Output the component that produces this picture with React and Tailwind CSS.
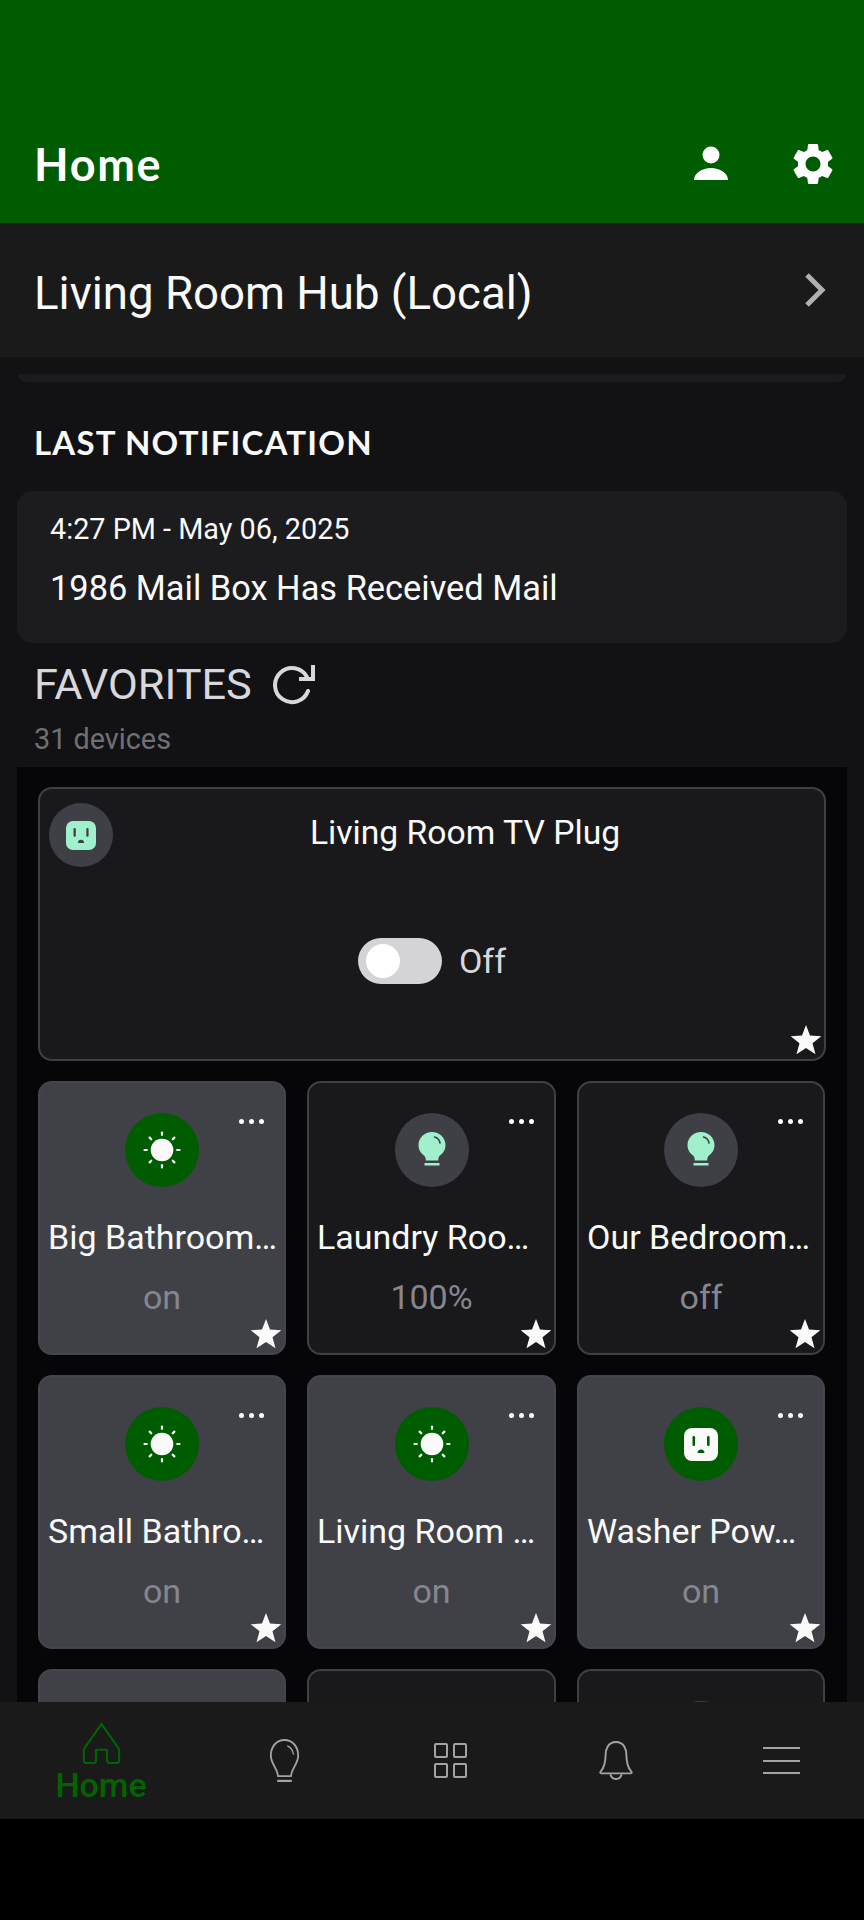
import { useState } from 'react'

const FONT = "font-['Roboto',sans-serif]"
const HEAD = "font-['Lato',sans-serif]"

function Star() {
  return (
    <svg viewBox="0 0 32 30" className="absolute bottom-[4px] right-[2px] h-[30px] w-[32px] fill-[#fafafa]">
      <path d="M16 0l4 10.6 11.3.6-8.800 7.100 3 11L16 23.100 6.500 29.300l3-11L.7 11.200 12 10.600z" />
    </svg>
  )
}

function Dots() {
  return (
    <div className="absolute right-[20px] top-[36px] flex gap-[5px]">
      <span className="h-[5px] w-[5px] rounded-full bg-white" />
      <span className="h-[5px] w-[5px] rounded-full bg-white" />
      <span className="h-[5px] w-[5px] rounded-full bg-white" />
    </div>
  )
}

function Sun() {
  const rays = [0, 45, 90, 135, 180, 225, 270, 315]
  return (
    <svg viewBox="0 0 40 40" className="h-[40px] w-[40px]">
      <circle cx="20" cy="20" r="11.300" fill="#fafafa" />
      {rays.map((r) => (
        <line key={r} x1="20" y1="2.500" x2="20" y2="4.800" stroke="#fafafa" strokeWidth="2.200" strokeLinecap="round" transform={`rotate(${r} 20 20)`} />
      ))}
    </svg>
  )
}

function Bulb() {
  return (
    <svg viewBox="0 0 30 38" className="h-[38px] w-[30px]">
      <path d="M15 1C7.500 1 1.500 6.800 1.500 14c0 4.800 2.300 7.800 5 10 1.600 1.300 2.300 2.800 2.300 5.500h12.400c0-2.700.7-4.200 2.300-5.500 2.700-2.200 5-5.200 5-10C28.500 6.800 22.500 1 15 1z" fill="#a0f0cd" />
      <rect x="7.500" y="32" width="15" height="2.500" fill="#a0f0cd" />
      <path d="M17.500 6c3 .6 5 3 5.500 6" fill="none" stroke="#3f4046" strokeWidth="1.600" strokeLinecap="round" />
    </svg>
  )
}

function Plug({ on, size = 34 }) {
  const color = on ? '#fafafa' : '#a0f0cd'
  const hole = on ? '#005c00' : '#3f4046'
  return (
    <svg viewBox="0 0 34 34" style={{ width: size, height: size }}>
      <rect x="0" y="1" width="34" height="33" rx="8" fill={color} />
      <rect x="8.500" y="9" width="2.600" height="10" rx="1.200" fill={hole} />
      <rect x="23" y="9" width="2.600" height="10" rx="1.200" fill={hole} />
      <path d="M13.500 26c0-2.200 1.500-3.600 3.500-3.600s3.500 1.400 3.500 3.600z" fill={hole} />
    </svg>
  )
}

function DeviceCard({ name, status, kind, on }) {
  return (
    <div className={`relative h-[274px] rounded-[14px] border-2 ${on ? 'border-[#45464c] bg-[#404146]' : 'border-[#3f4046] bg-[#19191b]'}`}>
      {kind !== 'none' && <Dots />}
      {kind !== 'none' && (
        <div className={`absolute left-1/2 top-[30px] flex h-[74px] w-[74px] -translate-x-1/2 items-center justify-center rounded-full ${on ? 'bg-[#005c00]' : 'bg-[#3f4046]'}`}>
          {kind === 'plug' ? <Plug on={on} /> : on ? <Sun /> : <Bulb />}
        </div>
      )}
      <p className="absolute left-[8px] top-[130px] whitespace-nowrap text-[34px] leading-[48px] text-[#fafafa]">{name}</p>
      <p className="absolute inset-x-0 top-[190px] text-center text-[34px] leading-[48px] text-[#85868f]">{status}</p>
      {kind !== 'none' && <Star />}
    </div>
  )
}

const devices = [
  { name: 'Big Bathroom…', status: 'on', kind: 'light', on: true },
  { name: 'Laundry Roo…', status: '100%', kind: 'light', on: false },
  { name: 'Our Bedroom…', status: 'off', kind: 'light', on: false },
  { name: 'Small Bathro…', status: 'on', kind: 'light', on: true },
  { name: 'Living Room …', status: 'on', kind: 'light', on: true },
  { name: 'Washer Pow…', status: 'on', kind: 'plug', on: true },
  { name: '', status: '', kind: 'none', on: true },
  { name: '', status: '', kind: 'none', on: false },
  { name: '', status: '', kind: 'light', on: false },
]

function BottomNav() {
  const stroke = '#a3a3a3'
  return (
    <nav className="flex h-[117px] shrink-0 items-start bg-[#1a1a1a]">
      <div className="ml-[52px] flex w-[98px] flex-col items-center pt-[20px]">
        <svg viewBox="0 0 42 44" preserveAspectRatio="none" className="h-[42px] w-[39px]" fill="none" stroke="#006400" strokeWidth="2.200">
          <path d="M21 2L3 27c-1 1-1 2-1 4v9c0 2 1 3 3 3h7c2 0 3-1 3-3V29h12v11c0 2 1 3 3 3h7c2 0 3-1 3-3v-9c0-2 0-3-1-4z" strokeLinejoin="round" />
        </svg>
        <span className="mt-[3px] text-[34px] font-medium leading-[36px] text-[#006400]">Home</span>
      </div>
      <svg viewBox="0 0 34 44" preserveAspectRatio="none" className="ml-[119px] mt-[37px] h-[43px] w-[31px]" fill="none" stroke={stroke} strokeWidth="2">
        <path d="M17 1C8 1 2 8 2 17c0 9 7 12 8 21h14c1-9 8-12 8-21C32 8 26 1 17 1z" />
        <path d="M9 43h16" strokeWidth="2.500" />
        <path d="M20 7c3 1 6 4 7 9" strokeWidth="1.500" />
      </svg>
      <div className="ml-[134px] mt-[41px] grid grid-cols-2 gap-[5px]">
        <span className="h-[15px] w-[14px] rounded-[2px] border-2 border-[#a3a3a3]" />
        <span className="h-[15px] w-[14px] rounded-[2px] border-2 border-[#a3a3a3]" />
        <span className="h-[15px] w-[14px] rounded-[2px] border-2 border-[#a3a3a3]" />
        <span className="h-[15px] w-[14px] rounded-[2px] border-2 border-[#a3a3a3]" />
      </div>
      <svg viewBox="0 0 38 41" preserveAspectRatio="none" className="ml-[131px] mt-[39px] h-[39px] w-[36px]" fill="none" stroke={stroke} strokeWidth="2">
        <path d="M19 1C11 1 8 8 8 15c0 7-1 12-5 17-1 1-1 2 1 2h30c2 0 2-1 1-2-4-5-5-10-5-17C30 8 27 1 19 1z" />
        <path d="M13 35c1 4 3 5 6 5s5-1 6-5" />
      </svg>
      <div className="ml-[129px] mt-[45px] flex w-[37px] flex-col gap-[10.500px]">
        <span className="h-[2px] bg-[#a3a3a3]" />
        <span className="h-[2px] bg-[#a3a3a3]" />
        <span className="h-[2px] bg-[#a3a3a3]" />
      </div>
    </nav>
  )
}

export default function App() {
  const [tvOn] = useState(false)

  return (
    <div className={`flex h-[1920px] flex-col overflow-hidden bg-black ${FONT}`}>
      <header className="flex h-[223px] shrink-0 items-end justify-between bg-[#005c00] pb-[34px] pl-[34px] pr-[26px]">
        <h1 className={`${HEAD} text-[45px] font-bold leading-[50px] tracking-[1.700px] text-white`}>Home</h1>
        <div className="flex items-center gap-[59px]">
          <svg viewBox="0 0 36 36" className="h-[36px] w-[36px] fill-white">
            <circle cx="18" cy="9" r="8.500" />
            <path d="M1 34c0-7 8-12 17-12s17 5 17 12z" />
          </svg>
          <svg viewBox="0 0 24 24" className="h-[50px] w-[50px] fill-white">
            <path d="M19.140 12.940c.04-.3.060-.61.060-.94 0-.32-.02-.64-.07-.94l2.030-1.580a.49.49 0 0 0 .12-.61l-1.920-3.320a.49.49 0 0 0-.59-.22l-2.390.96c-.5-.38-1.030-.7-1.620-.94l-.36-2.540a.48.48 0 0 0-.48-.41h-3.840c-.24 0-.43.170-.47.410l-.36 2.540c-.59.240-1.130.570-1.620.94l-2.390-.96a.48.48 0 0 0-.59.220L2.740 8.870c-.12.210-.08.470.12.610l2.030 1.580c-.05.300-.09.630-.09.940s.02.640.07.940l-2.030 1.580a.49.49 0 0 0-.12.61l1.920 3.320c.12.220.37.290.59.220l2.390-.96c.5.380 1.030.7 1.620.94l.36 2.540c.05.240.24.410.48.410h3.840c.24 0 .44-.17.47-.41l.36-2.540c.59-.24 1.130-.56 1.620-.94l2.390.96c.22.080.47 0 .59-.22l1.920-3.320c.12-.22.070-.47-.12-.61l-2.010-1.580zM12 15.600A3.610 3.610 0 0 1 8.400 12c0-1.980 1.620-3.600 3.600-3.600s3.600 1.620 3.600 3.600-1.620 3.600-3.600 3.600z" />
          </svg>
        </div>
      </header>

      <div className="flex h-[134px] shrink-0 items-center justify-between bg-[#1a1a1a] pl-[34px] pr-[38px]">
        <span className="mt-[8px] text-[45.600px] leading-[54px] text-[#fafafa]">Living Room Hub (Local)</span>
        <svg viewBox="0 0 21 34" className="h-[34px] w-[21px]" fill="none" stroke="#b0b0b0" strokeWidth="5">
          <path d="M2 2l15 15L2 32" />
        </svg>
      </div>

      <main className="h-[1345px] shrink-0 overflow-hidden bg-[#121214]">
        <div className="mx-[18px] mt-[17px] h-[8px] rounded-b-[14px] bg-[#1c1c1e]" />

        <h2 className={`${HEAD} ml-[34px] mt-[40px] text-[33px] font-bold leading-[40px] tracking-[1.200px] text-[#fafafa]`}>LAST NOTIFICATION</h2>
        <div className="mx-[17px] mt-[29px] h-[152px] rounded-[16px] bg-[#1c1c1e] pl-[33px] pt-[20px]">
          <p className="text-[28.800px] leading-[36px] text-[#fafafa]">4:27 PM - May 06, 2025</p>
          <p className="mt-[21px] text-[34.400px] leading-[40px] text-[#fafafa]">1986 Mail Box Has Received Mail</p>
        </div>

        <div className="ml-[34px] mt-[17px] flex items-center gap-[21px]">
          <span className="text-[43.300px] leading-[50px] text-[#d8d8dc]">FAVORITES</span>
          <svg viewBox="0 0 42 42" className="h-[42px] w-[42px]" fill="none" stroke="#d8d8dc" strokeWidth="4">
            <path d="M35 27a17 17 0 1 1-1-14" strokeLinecap="round" />
            <path d="M40 1v14H26" />
          </svg>
        </div>
        <p className="ml-[34px] mt-[11px] text-[28.800px] leading-[36px] text-[#707074]">31 devices</p>

        <div className="mx-[17px] mt-[10px] h-[1000px] bg-[#060608] px-[21px] pt-[20px]">
          <div className="relative h-[274px] rounded-[14px] border-2 border-[#3f4046] bg-[#19191b]">
            <div className="absolute left-[9px] top-[14px] flex h-[64px] w-[64px] items-center justify-center rounded-full bg-[#3f4046]">
              <Plug on={false} size={30} />
            </div>
            <p className="pl-[66px] pt-[21px] text-center text-[33.700px] leading-[46px] text-[#fafafa]">Living Room TV Plug</p>
            <div className="mt-[82px] flex items-center justify-center gap-[17px]">
              <div className="flex h-[46px] w-[84px] items-center rounded-full bg-[#d4d4d8] pl-[8px]">
                <span className={`h-[34px] w-[34px] rounded-full bg-white ${tvOn ? 'ml-auto' : ''}`} />
              </div>
              <span className="text-[34px] leading-[46px] text-[#d8d8dc]">Off</span>
            </div>
            <Star />
          </div>

          <div className="mt-[20px] grid grid-cols-[248px_249px_248px] gap-x-[21px] gap-y-[20px]">
            {devices.map((d, i) => (
              <DeviceCard key={i} {...d} />
            ))}
          </div>
        </div>
      </main>

      <BottomNav />
    </div>
  )
}
